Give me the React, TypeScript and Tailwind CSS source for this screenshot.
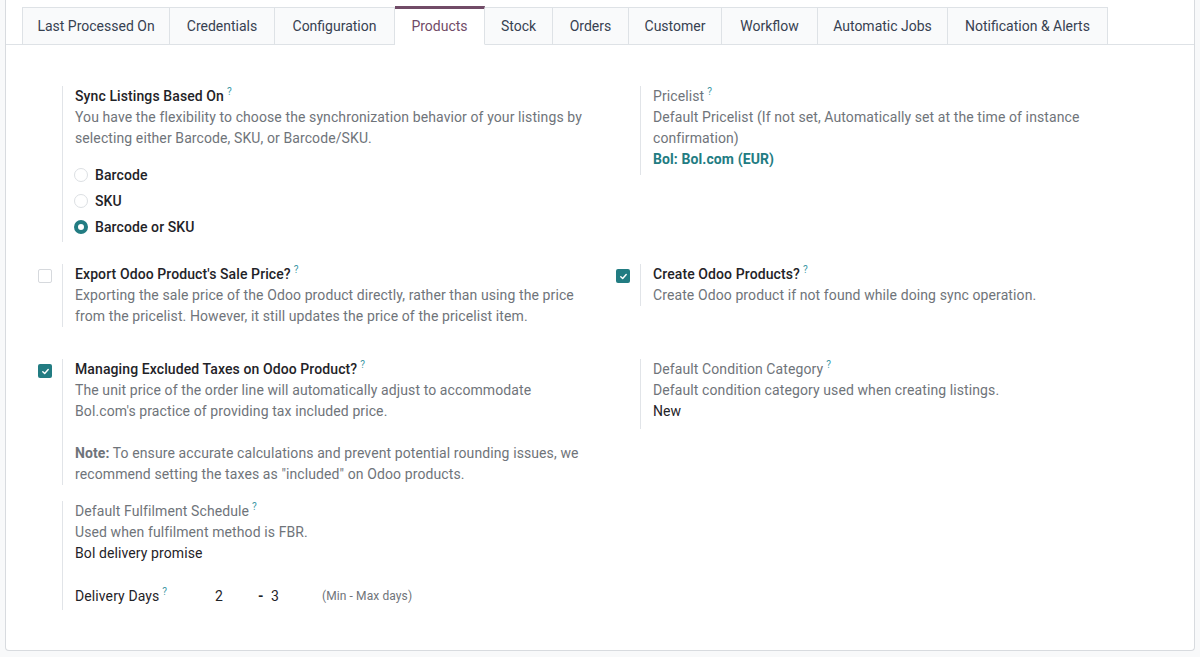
import React from "react";

const tabs = [
  { label: "Last Processed On", w: "w-[148px]" },
  { label: "Credentials", w: "w-[105px]" },
  { label: "Configuration", w: "w-[120px]" },
  { label: "Products", w: "w-[90px]", active: true },
  { label: "Stock", w: "w-[68px]" },
  { label: "Orders", w: "w-[76px]" },
  { label: "Customer", w: "w-[93px]" },
  { label: "Workflow", w: "w-[96px]" },
  { label: "Automatic Jobs", w: "w-[130px]" },
  { label: "Notification & Alerts", w: "w-[160px]" },
];

const Help = () => (
  <sup className="ml-[3px] text-[10px] text-[#3c98a5] font-normal top-[-6px]">?</sup>
);

const Checkbox = ({ checked }: { checked?: boolean }) =>
  checked ? (
    <span className="flex h-[14px] w-[14px] items-center justify-center rounded-[2px] bg-[#227c82]">
      <svg width="9" height="9" viewBox="0 0 10 10" fill="none">
        <path d="M2 5.2 4.1 7.2 8 2.8" stroke="white" strokeWidth="1.6" strokeLinecap="round" strokeLinejoin="round" />
      </svg>
    </span>
  ) : (
    <span className="block h-[14px] w-[14px] rounded-[2px] border border-[#d6d9dd] bg-white" />
  );

const Radio = ({ checked, label }: { checked?: boolean; label: string }) => (
  <div className="flex h-[26px] items-center gap-[7px]">
    {checked ? (
      <span className="block h-[14px] w-[14px] rounded-full border-[4px] border-[#227c82] bg-white" />
    ) : (
      <span className="block h-[14px] w-[14px] rounded-full border border-[#dcdfe3] bg-white" />
    )}
    <span className="text-[14px] font-medium text-[#1f2328]">{label}</span>
  </div>
);

const Setting = ({
  check,
  children,
}: {
  check?: "on" | "off";
  children: React.ReactNode;
}) => (
  <div className="flex items-start">
    <div className="w-[40px] shrink-0 pl-[16px] pt-[5px]">
      {check ? <Checkbox checked={check === "on"} /> : null}
    </div>
    <div className="border-l border-[#e1e4e8] pl-[12px] leading-[21px] text-[14px] tracking-[0.1px]">
      {children}
    </div>
  </div>
);

const Title = ({ children }: { children: React.ReactNode }) => (
  <div className="font-medium text-[#1f2328] whitespace-nowrap">
    {children}
    <Help />
  </div>
);

const Label = ({ children }: { children: React.ReactNode }) => (
  <div className="text-[#6f747a] whitespace-nowrap">
    {children}
    <Help />
  </div>
);

const Desc = ({ children }: { children: React.ReactNode }) => (
  <div className="text-[#6f747a] whitespace-nowrap">{children}</div>
);

export default function App() {
  return (
    <div className="min-h-screen bg-[#f8f9fa] px-[5px] font-['Roboto','Liberation_Sans',sans-serif]">
      <div className="rounded-b-[4px] border-x border-b border-[#d8dbdf] bg-white pb-[40px]">
        {/* tabs */}
        <div className="flex border-b border-[#dee2e6] px-[16px] pt-[7px]">
          {tabs.map((t, i) => (
            <div
              key={t.label}
              className={`${t.w} -mb-px flex h-[38px] items-center justify-center text-[14px] ${
                i === 0 ? "border-l" : ""
              } border-r border-[#dee2e6] ${
                t.active
                  ? "-mt-px h-[39px] border-t-[3px] border-t-[#714b67] border-b border-b-white bg-white text-[#714b67]"
                  : "border-t border-b bg-[#f9fafb] text-[#374151]"
              }`}
            >
              {t.label}
            </div>
          ))}
        </div>

        <div className="px-[16px] pt-[41px]">
          {/* row 1 */}
          <div className="grid grid-cols-2">
            <Setting>
              <Title>Sync Listings Based On</Title>
              <Desc>
                You have the flexibility to choose the synchronization behavior of your listings by
                <br />
                selecting either Barcode, SKU, or Barcode/SKU.
              </Desc>
              <div className="mt-[13px] -ml-[1px] pb-[2px]">
                <Radio label="Barcode" />
                <Radio label="SKU" />
                <Radio checked label="Barcode or SKU" />
              </div>
            </Setting>
            <Setting>
              <Label>Pricelist</Label>
              <Desc>
                Default Pricelist (If not set, Automatically set at the time of instance
                <br />
                confirmation)
              </Desc>
              <div className="pb-[5px] font-bold text-[#227c82]">Bol: Bol.com (EUR)</div>
            </Setting>
          </div>

          {/* row 2 */}
          <div className="mt-[22px] grid grid-cols-2">
            <Setting check="off">
              <Title>Export Odoo Product's Sale Price?</Title>
              <Desc>
                Exporting the sale price of the Odoo product directly, rather than using the price
                <br />
                from the pricelist. However, it still updates the price of the pricelist item.
              </Desc>
            </Setting>
            <Setting check="on">
              <Title>Create Odoo Products?</Title>
              <Desc>Create Odoo product if not found while doing sync operation.</Desc>
            </Setting>
          </div>

          {/* row 3 */}
          <div className="mt-[32px] grid grid-cols-2">
            <Setting check="on">
              <Title>Managing Excluded Taxes on Odoo Product?</Title>
              <Desc>
                The unit price of the order line will automatically adjust to accommodate
                <br />
                Bol.com's practice of providing tax included price.
              </Desc>
              <Desc>
                <div className="mt-[21px]">
                  <span className="font-bold">Note:</span> To ensure accurate calculations and prevent potential rounding issues, we
                  <br />
                  recommend setting the taxes as "included" on Odoo products.
                </div>
              </Desc>
            </Setting>
            <Setting>
              <Label>Default Condition Category</Label>
              <Desc>Default condition category used when creating listings.</Desc>
              <div className="pb-[7px] text-[#1f2328]">New</div>
            </Setting>
          </div>

          {/* row 4 */}
          <div className="mt-[16px] grid grid-cols-2">
            <Setting>
              <Label>Default Fulfilment Schedule</Label>
              <Desc>Used when fulfilment method is FBR.</Desc>
              <div className="text-[#1f2328]">Bol delivery promise</div>
              <div className="mt-[22px] flex items-center pb-[3px]">
                <div className="w-[140px] whitespace-nowrap text-[#1f2328]">
                  Delivery Days
                  <Help />
                </div>
                <div className="w-[43px] text-[#1f2328]">2</div>
                <div className="w-[13px] font-bold text-[#1f2328]">-</div>
                <div className="w-[51px] text-[#1f2328]">3</div>
                <div className="text-[12px] text-[#6f747a]">(Min - Max days)</div>
              </div>
            </Setting>
            <div />
          </div>
        </div>
      </div>
    </div>
  );
}
